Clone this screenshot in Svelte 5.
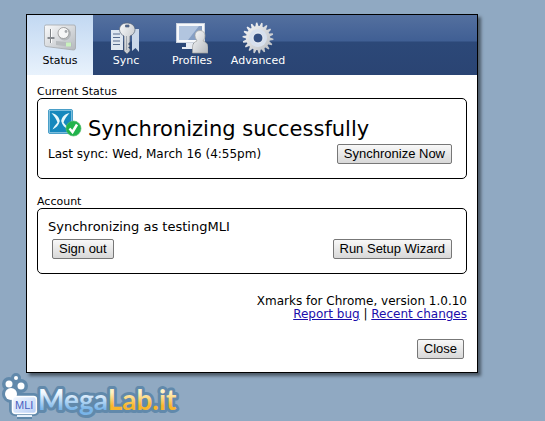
<script lang="ts">
	type Tab = {
		id: string;
		label: string;
	};

	const tabs: Tab[] = [
		{ id: 'status', label: 'Status' },
		{ id: 'sync', label: 'Sync' },
		{ id: 'profiles', label: 'Profiles' },
		{ id: 'advanced', label: 'Advanced' }
	];

	let active = $state('status');

	// outline of the gear: alternating outer and inner points
	const teeth = 18;
	const gear = Array.from({ length: teeth * 4 }, (_, i) => {
		const r = i % 4 < 2 ? 15.5 : 12;
		const a = ((i + 0.5) / (teeth * 4)) * Math.PI * 2;
		return `${(16 + r * Math.cos(a)).toFixed(2)},${(16 + r * Math.sin(a)).toFixed(2)}`;
	}).join(' ');
</script>

<main>
	<div class="dialog">
		<nav>
			{#each tabs as tab}
				<button class="tab" class:active={active === tab.id} onclick={() => (active = tab.id)}>
					<svg viewBox="0 0 32 32" aria-hidden="true">
						<defs>
							<linearGradient id="metal-{tab.id}" x1="0" y1="0" x2="1" y2="1">
								<stop offset="0" stop-color="#fafbfc" />
								<stop offset="1" stop-color="#b4b8bd" />
							</linearGradient>
						</defs>
						{#if tab.id === 'status'}
							<path d="M2 3H30Q31.500 3 31.500 5V26Q31.500 28 29.500 28L2 24.500Q.5 24 .5 22.500V4.500Q.5 3 2 3Z" fill="url(#metal-status)" stroke="#a4a8ac" stroke-width=".8" />
							<path d="M6.500 7V21" stroke="#7f8387" stroke-width="1" />
							<path d="M7.500 7V21" stroke="#fff" stroke-width="1" />
							<rect x="3.500" y="15" width="7" height="2" rx=".5" fill="#85898e" />
							<circle cx="20.500" cy="12" r="6.500" fill="#b4b8bb" />
							<circle cx="19.500" cy="11" r="5.500" fill="#f6f6f6" stroke="#8a8a8a" stroke-width=".7" />
							<circle cx="22" cy="9.500" r="1.400" fill="#a5a8ab" />
							<path d="M12 19 28 20.500V25L12 23Z" fill="#b8bcbf" />
							<rect x="22" y="20.500" width="5" height="4" fill="#c9f2bd" />
						{:else if tab.id === 'sync'}
							<path d="M1 8H13V28H1Z" fill="#dfe7f1" />
							<path d="M3 12H10M3 15.500H10M3 19H10M3 22.500H10" stroke="#566b8d" stroke-width="1.200" />
							<path d="M22 7H29V30L25.500 26 22 29Z" fill="#cbd8e9" />
							<path d="M17 1C12 1 9.500 4 9.500 7.500 9.500 11 12 13 14 14V29L17 32 20 29V27L18.500 25.500 20 24 18.500 22 20 20V14C23 13 25 10.500 25 7.500 25 4 22 1 17 1ZM15.500 3H19V5H15.500Z" fill="url(#metal-sync)" stroke="#566375" stroke-width=".7" fill-rule="evenodd" />
							<path d="M16.500 14V28" stroke="#9299a2" stroke-width=".8" />
						{:else if tab.id === 'profiles'}
							<rect x=".5" y="1.500" width="28" height="19" fill="#f6f8fb" stroke="#cbd3df" />
							<path d="M3 4H26V18H3Z" fill="#869fc4" />
							<path d="M3 4H23L12 18H3Z" fill="#b2c5df" />
							<path d="M10 21H17V25H20V27H6V25H10Z" fill="#e6ebf3" />
							<path d="M24 8.500C20.500 8.500 19 11 19 13.500 19 16 20.500 17.500 21 19 18 20 16.500 22 16.500 25V31H32V25C32 22 30 20 27 19 28 17.500 29 16 29 13.500 29 11 27.500 8.500 24 8.500Z" fill="url(#metal-profiles)" stroke="#a1a19d" stroke-width=".7" />
						{:else}
							<polygon points={gear} fill="url(#metal-advanced)" />
							<circle cx="16" cy="16" r="9" fill="#d7e0ed" />
							<circle cx="16" cy="16" r="5" fill="#344f80" stroke="#f2f5f9" stroke-width="1" />
						{/if}
					</svg>
					<span>{tab.label}</span>
				</button>
			{/each}
		</nav>

		<div class="content">
			<section>
				<h2>Current Status</h2>
				<div class="box">
					<div class="headline">
						<svg viewBox="0 0 34 30" aria-hidden="true">
							<rect x=".5" y="1.500" width="24" height="24" rx="1.500" fill="#1688bd" stroke="#4a9fc8" />
							<rect x="1.500" y="2.500" width="22" height="22" fill="none" stroke="#a8d6eb" stroke-width=".7" />
							<path d="M3.500 5C8 6 11 8.500 11.800 13 11 17 8 20 4.500 21.500 6 18.500 7.500 17 9.500 14.500 8.500 11 6 8 3.500 5Z" fill="#e8f8fc" />
							<path d="M21.500 5C17 6 14 8.500 13.200 13 14 17 17 20 20.500 21.500 19 18.500 17.500 17 15.500 14.500 16.500 11 19 8 21.500 5Z" fill="#e8f8fc" />
							<circle cx="25.500" cy="20.500" r="7.500" fill="#20b34b" stroke="#56bd70" stroke-width=".7" />
							<path d="M21.500 20.500 24.500 24 29 16.500" fill="none" stroke="#fff" stroke-width="2.500" />
						</svg>
						<h1>Synchronizing successfully</h1>
					</div>
					<div class="row">
						<p>Last sync: Wed, March 16 (4:55pm)</p>
						<button class="btn">Synchronize Now</button>
					</div>
				</div>
			</section>

			<section>
				<h2>Account</h2>
				<div class="box">
					<p class="account">Synchronizing as testingMLI</p>
					<div class="row inset">
						<button class="btn">Sign out</button>
						<button class="btn">Run Setup Wizard</button>
					</div>
				</div>
			</section>

			<footer>
				<p>Xmarks for Chrome, version 1.0.10</p>
				<p><a href="#report">Report bug</a> | <a href="#changes">Recent changes</a></p>
				<button class="btn close">Close</button>
			</footer>
		</div>
	</div>

	<svg class="watermark" viewBox="0 0 180 50" role="img" aria-label="MegaLab.it">
		<defs>
			<linearGradient id="blue" x1="0" y1="0" x2="0" y2="1">
				<stop offset=".3" stop-color="#f4faff" />
				<stop offset=".8" stop-color="#79b5e9" />
			</linearGradient>
			<linearGradient id="gold" x1="0" y1="0" x2="0" y2="1">
				<stop offset=".3" stop-color="#fff3c4" />
				<stop offset=".7" stop-color="#f9b62b" />
			</linearGradient>
			<linearGradient id="screen" x1="0" y1="0" x2="1" y2="1">
				<stop offset="0" stop-color="#f4f9ff" />
				<stop offset="1" stop-color="#b5cdf5" />
			</linearGradient>
		</defs>
		<g fill="#6189ab" stroke="#6189ab" stroke-width="6" stroke-linejoin="round">
			<circle cx="16" cy="7" r="2" />
			<circle cx="9" cy="13" r="4" />
			<circle cx="21" cy="15" r="4" />
			<circle cx="11" cy="23" r="6" />
			<rect x="12" y="25" width="25" height="17" rx="3" />
			<path d="M17 45H32" />
		</g>
		<g fill="#fff">
			<circle cx="16" cy="7" r="2" />
			<circle cx="9" cy="13" r="3.500" />
			<circle cx="21" cy="15" r="3.500" />
			<circle cx="11" cy="23" r="6" />
		</g>
		<rect x="12.500" y="25.500" width="24" height="17" rx="3" fill="url(#screen)" stroke="#fff" stroke-width="1.500" />
		<path d="M17 45H32" stroke="#e8f1fb" stroke-width="2" />
		<text class="badge" x="15" y="38">MLI</text>
		<text class="brand" x="38" y="39"><tspan fill="url(#blue)">Mega</tspan><tspan fill="url(#gold)">Lab.it</tspan></text>
	</svg>
</main>

<style>
	:global(body) {
		margin: 0;
		background: #90a9c2;
	}

	main {
		position: relative;
		box-sizing: border-box;
		min-height: 100vh;
		padding: 14px 67px 48px 26px;
		font-family: Verdana, 'DejaVu Sans', sans-serif;
		font-size: 12px;
		line-height: 13px;
		color: #000;
	}

	.dialog {
		border: 1px solid #000;
		background: #fff;
		box-shadow: 3px 3px 3px #4c5a68;
	}

	nav {
		display: flex;
		background: linear-gradient(#54709f 0, #405f94 26px, #2c4878 27px, #2a4473 100%);
	}

	.tab {
		display: flex;
		flex-direction: column;
		align-items: center;
		width: 66px;
		height: 60px;
		padding: 7px 0 0;
		border: 0;
		background: none;
		font-family: inherit;
		font-size: 11px;
		line-height: 14px;
		color: #fff;
	}

	.tab.active {
		background: linear-gradient(#c2d8f2, #e8f2fc);
		color: #000;
	}

	.tab svg {
		width: 32px;
		height: 32px;
	}

	.content {
		padding: 10px 10px 13px;
	}

	h1,
	h2,
	p {
		margin: 0;
		font-weight: 400;
	}

	h1 {
		font-size: 21px;
		line-height: 30px;
		padding-top: 6px;
	}

	h2 {
		font-size: 11px;
	}

	section + section {
		margin-top: 16px;
	}

	.box {
		padding: 9px 14px 14px 10px;
		border: 1px solid #000;
		border-radius: 5px;
	}

	.headline {
		display: flex;
		gap: 6px;
	}

	.headline svg {
		width: 34px;
		height: 30px;
	}

	.row {
		display: flex;
		justify-content: space-between;
		align-items: center;
	}

	.row.inset {
		padding-left: 4px;
	}

	.account {
		padding-bottom: 3px;
		font-size: 13px;
		line-height: 18px;
	}

	.btn {
		height: 20px;
		padding: 0 6px;
		border: 1px solid #777;
		border-radius: 2px;
		background: linear-gradient(#f8f8f8, #d8d8d8);
		font-family: Arial, 'Liberation Sans', sans-serif;
		font-size: 13px;
		line-height: 18px;
		color: #000;
	}

	footer {
		margin-top: 21px;
		text-align: right;
	}

	.close {
		margin: 18px 3px 0 0;
	}

	a {
		color: #1a0dab;
	}

	.watermark {
		position: absolute;
		left: 0;
		bottom: 0;
		width: 180px;
		height: 50px;
	}

	.badge {
		font: 11px 'Liberation Sans', sans-serif;
		fill: #4a5fc0;
	}

	.brand {
		font: bold 28px Lato, sans-serif;
		stroke: #6189ab;
		stroke-width: 6px;
		stroke-linejoin: round;
		paint-order: stroke;
	}
</style>
